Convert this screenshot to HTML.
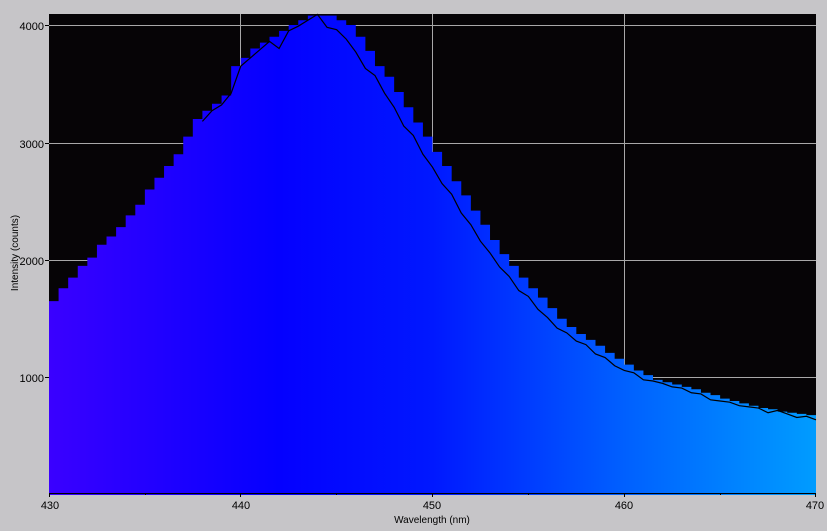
<!DOCTYPE html>
<html><head><style>
html,body{margin:0;padding:0;background:#c6c5c8;}
svg{display:block;font-family:"Liberation Sans",sans-serif;}
</style></head><body>
<svg width="827" height="531" viewBox="0 0 827 531" xmlns="http://www.w3.org/2000/svg">
<defs>
<linearGradient id="g" x1="0" y1="0" x2="1" y2="0">
<stop offset="0" stop-color="#3a00ff"/>
<stop offset="0.3" stop-color="#0400ff"/>
<stop offset="0.5" stop-color="#0018ff"/>
<stop offset="0.75" stop-color="#0060ff"/>
<stop offset="1" stop-color="#009cff"/>
</linearGradient>
</defs>
<rect x="0" y="0" width="827" height="531" fill="#c6c5c8"/>
<rect x="49" y="14" width="767" height="479" fill="#060406"/>
<g stroke="#a8a8a8" stroke-width="1">
<line x1="49" y1="25.5" x2="816" y2="25.5"/>
<line x1="49" y1="143.5" x2="816" y2="143.5"/>
<line x1="49" y1="260.5" x2="816" y2="260.5"/>
<line x1="49" y1="377.5" x2="816" y2="377.5"/>
<line x1="240.5" y1="14" x2="240.5" y2="493"/>
<line x1="432.5" y1="14" x2="432.5" y2="493"/>
<line x1="624.5" y1="14" x2="624.5" y2="493"/>
</g>
<g transform="translate(49,495) scale(19.175,-0.1175) translate(-430,0)">
<polygon fill="url(#g)" points="430,0 430,1650 430.5,1650 430.5,1760 431,1760 431,1850 431.5,1850 431.5,1950 432,1950 432,2020 432.5,2020 432.5,2130 433,2130 433,2200 433.5,2200 433.5,2280 434,2280 434,2380 434.5,2380 434.5,2470 435,2470 435,2600 435.5,2600 435.5,2700 436,2700 436,2800 436.5,2800 436.5,2900 437,2900 437,3050 437.5,3050 437.5,3200 438,3200 438,3270 438.5,3270 438.5,3330 439,3330 439,3400 439.5,3400 439.5,3650 440,3650 440,3720 440.5,3720 440.5,3800 441,3800 441,3850 441.5,3850 441.5,3900 442,3900 442,3950 442.5,3950 442.5,4000 443,4000 443,4040 443.5,4040 443.5,4080 445,4080 445,4040 445.5,4040 445.5,4000 446,4000 446,3900 446.5,3900 446.5,3780 447,3780 447,3650 447.5,3650 447.5,3560 448,3560 448,3430 448.5,3430 448.5,3300 449,3300 449,3170 449.5,3170 449.5,3050 450,3050 450,2920 450.5,2920 450.5,2800 451,2800 451,2670 451.5,2670 451.5,2550 452,2550 452,2420 452.5,2420 452.5,2300 453,2300 453,2170 453.5,2170 453.5,2050 454,2050 454,1950 454.5,1950 454.5,1850 455,1850 455,1760 455.5,1760 455.5,1680 456,1680 456,1590 456.5,1590 456.5,1500 457,1500 457,1430 457.5,1430 457.5,1370 458,1370 458,1320 458.5,1320 458.5,1270 459,1270 459,1210 459.5,1210 459.5,1160 460,1160 460,1110 460.5,1110 460.5,1060 461,1060 461,1020 461.5,1020 461.5,980 462,980 462,960 462.5,960 462.5,940 463,940 463,920 463.5,920 463.5,900 464,900 464,870 464.5,870 464.5,850 465,850 465,820 465.5,820 465.5,800 466,800 466,780 466.5,780 466.5,760 467,760 467,740 467.5,740 467.5,730 468,730 468,710 468.5,710 468.5,700 469,700 469,690 469.5,690 469.5,680 470,680 470,0"/>
<polyline fill="none" stroke="#000" stroke-width="1.2" vector-effect="non-scaling-stroke" points="438,3180 438.5,3270 439,3320 439.5,3420 440,3650 440.5,3720 441,3790 441.5,3860 442,3800 442.5,3950 443,3990 443.5,4040 444,4090 444.5,3980 445,3960 445.5,3880 446,3770 446.5,3630 447,3570 447.5,3420 448,3300 448.5,3140 449,3060 449.5,2900 450,2790 450.5,2650 451,2560 451.5,2400 452,2300 452.5,2160 453,2060 453.5,1940 454,1860 454.5,1740 455,1690 455.5,1580 456,1510 456.5,1420 457,1380 457.5,1310 458,1280 458.5,1200 459,1170 459.5,1100 460,1060 460.5,1040 461,980 461.5,970 462,950 462.5,920 463,910 463.5,870 464,860 464.5,810 465,800 465.5,790 466,760 466.5,750 467,740 467.5,700 468,720 468.5,690 469,660 469.5,670 470,640"/>
</g>
<g fill="#000" font-size="11" text-anchor="end">
<text x="44" y="30">4000</text>
<text x="44" y="148">3000</text>
<text x="44" y="265">2000</text>
<text x="44" y="382">1000</text>
</g>
<g stroke="#000"><line x1="45" y1="25.5" x2="49" y2="25.5"/><line x1="45" y1="143.5" x2="49" y2="143.5"/><line x1="45" y1="260.5" x2="49" y2="260.5"/><line x1="45" y1="377.5" x2="49" y2="377.5"/>
<line x1="49" y1="493.5" x2="816" y2="493.5"/>
<line x1="49.5" y1="493" x2="49.5" y2="497"/><line x1="240.5" y1="493" x2="240.5" y2="497"/><line x1="432.5" y1="493" x2="432.5" y2="497"/><line x1="624.5" y1="493" x2="624.5" y2="497"/><line x1="815.5" y1="493" x2="815.5" y2="497"/>
<line x1="145.5" y1="493" x2="145.5" y2="495"/><line x1="336.5" y1="493" x2="336.5" y2="495"/><line x1="528.5" y1="493" x2="528.5" y2="495"/><line x1="720.5" y1="493" x2="720.5" y2="495"/>
</g>
<g fill="#000" font-size="11" text-anchor="middle">
<text x="50" y="509">430</text>
<text x="241" y="509">440</text>
<text x="432" y="509">450</text>
<text x="624" y="509">460</text>
<text x="815" y="509">470</text>
<text x="432" y="523" font-size="10">Wavelength (nm)</text>
<text x="0" y="0" font-size="10" transform="translate(18,253) rotate(-90)">Intensity (counts)</text>
</g>
</svg>
</body></html>
